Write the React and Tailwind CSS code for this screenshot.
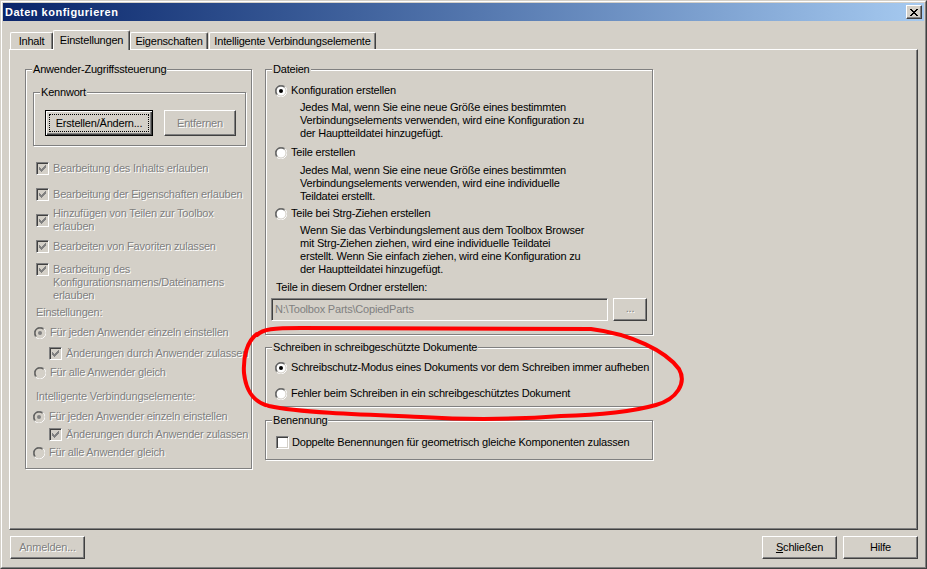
import React from "react"

const dis = "text-[#808080] [text-shadow:1px_1px_0_#fff]"

// classic 3D raised button
const Btn = ({ children, className = "", disabled, isDefault }) => (
  <div
    className={`flex items-center justify-center bg-[#d4d0c8] ${
      isDefault
        ? "border border-black shadow-[inset_1px_1px_0_#fff,inset_-1px_-1px_0_#404040,inset_-2px_-2px_0_#808080]"
        : "border border-t-white border-l-white border-r-[#404040] border-b-[#404040] shadow-[inset_-1px_-1px_0_#808080]"
    } ${disabled ? dis : "text-black"} ${className}`}
  >
    {children}
  </div>
)

const Check = ({ checked, disabled }) => (
  <div
    className={`w-[13px] h-[13px] shrink-0 flex items-center justify-center border border-t-[#808080] border-l-[#808080] border-r-white border-b-white shadow-[inset_1px_1px_0_#404040,inset_-1px_-1px_0_#d4d0c8] ${
      disabled ? "bg-[#d4d0c8]" : "bg-white"
    }`}
  >
    {checked && (
      <svg width="7" height="7" viewBox="0 0 7 7" fill={disabled ? "#808080" : "#000"}>
        <path d="M0 2h1v3H0zM1 3h1v3H1zM2 4h1v3H2zM3 3h1v3H3zM4 2h1v3H4zM5 1h1v3H5zM6 0h1v3H6z" />
      </svg>
    )}
  </div>
)

const Radio = ({ checked, disabled }) => (
  <svg width="12" height="12" viewBox="0 0 12 12" className="shrink-0">
    <circle cx="6" cy="6" r="5" fill={disabled ? "#d4d0c8" : "#fff"} />
    <path d="M10.24 1.76A6 6 0 0 0 1.76 10.24" stroke="#808080" fill="none" />
    <path d="M10.24 1.76A6 6 0 0 1 1.76 10.24" stroke="#fff" fill="none" />
    <path d="M9.54 2.46A5 5 0 0 0 2.46 9.54" stroke="#404040" fill="none" />
    <path d="M9.54 2.46A5 5 0 0 1 2.46 9.54" stroke="#d4d0c8" fill="none" />
    {checked && <circle cx="6" cy="6" r="2" fill={disabled ? "#808080" : "#000"} />}
  </svg>
)

const Group = ({ title, className = "", children }) => (
  <fieldset
    className={`min-w-0 border border-[#808080] shadow-[inset_1px_1px_0_#fff,1px_1px_0_#fff] ${className}`}
  >
    <legend className="ml-[6px] px-px bg-[#d4d0c8] leading-[13px] text-black">{title}</legend>
    {children}
  </fieldset>
)

const Tab = ({ label, w, active }) => (
  <div
    className={`${w} flex items-center justify-center border-t border-l border-r border-t-white border-l-white border-r-[#404040] shadow-[inset_-1px_0_0_#808080] rounded-t-[2px] bg-[#d4d0c8] whitespace-nowrap ${
      active ? "h-[20px] -mb-px relative z-10" : "h-[17px]"
    }`}
  >
    {label}
  </div>
)

const Desc = ({ children, className = "" }) => (
  <div className={`ml-[34px] leading-[13px] whitespace-nowrap ${className}`}>{children}</div>
)

const Row = ({ className = "", children }) => (
  <div className={`flex items-center leading-[13px] whitespace-nowrap ${className}`}>{children}</div>
)

export default function App() {
  return (
    <div className="relative w-[927px] h-[569px] bg-[#d4d0c8] border border-t-[#d4d0c8] border-l-[#d4d0c8] border-r-[#404040] border-b-[#404040] font-['Liberation_Sans',Arial,sans-serif] text-[11px] tracking-[-0.2px] text-black overflow-hidden">
      <div className="h-full border border-t-white border-l-white border-r-[#808080] border-b-[#808080] p-px flex flex-col">
        {/* Title bar */}
        <div className="h-[18px] shrink-0 bg-linear-to-r from-[#0a246a] to-[#a6caf0] flex items-center justify-between pl-[2px] pr-[2px]">
          <span className="text-white font-bold text-[11px] tracking-[0.5px]">Daten konfigurieren</span>
          <Btn className="w-[16px] h-[14px]">
            <svg width="8" height="7" viewBox="0 0 8 7" fill="#000">
              <path d="M0 0h2v1H0zM6 0h2v1H6zM1 1h2v1H1zM5 1h2v1H5zM2 2h4v1H2zM3 3h2v1H3zM2 4h4v1H2zM1 5h2v1H1zM5 5h2v1H5zM0 6h2v1H0zM6 6h2v1H6z" />
            </svg>
          </Btn>
        </div>

        <div className="px-[6px] flex flex-col">
          {/* Tabs */}
          <div className="flex items-end h-[19px] mt-[9px] pl-px">
            <Tab label="Inhalt" w="w-[43px]" />
            <Tab label="Einstellungen" w="w-[77px]" active />
            <Tab label="Eigenschaften" w="w-[78px]" />
            <div className="ml-px">
              <Tab label="Intelligente Verbindungselemente" w="w-[167px]" />
            </div>
          </div>

          {/* Tab panel */}
          <div className="h-[481px] border border-t-white border-l-white border-r-[#404040] border-b-[#404040] shadow-[inset_-1px_-1px_0_#808080] pt-[13px] pl-[15px] flex items-start">
            {/* Left group */}
            <Group title="Anwender-Zugriffssteuerung" className="w-[227px] shrink-0 pb-[9px]">
              <Group title="Kennwort" className="ml-[7px] mt-[10px] w-[213px] pb-[9px]">
                <div className="flex mt-[11px] ml-[11px]">
                  <Btn isDefault className="w-[108px] h-[26px]">
                    <span className="w-[100px] h-[18px] flex items-center justify-center border border-dotted border-black">Erstellen/Ändern...</span>
                  </Btn>
                  <Btn disabled className="w-[72px] h-[26px] ml-[11px]">Entfernen</Btn>
                </div>
              </Group>

              <Row className={`ml-[10px] mt-[16px] gap-[4px] ${dis}`}>
                <Check checked disabled />
                <span>Bearbeitung des Inhalts erlauben</span>
              </Row>
              <Row className={`ml-[10px] mt-[13px] gap-[4px] ${dis}`}>
                <Check checked disabled />
                <span>Bearbeitung der Eigenschaften erlauben</span>
              </Row>
              <Row className={`ml-[10px] mt-[6px] gap-[4px] ${dis}`}>
                <Check checked disabled />
                <span>
                  Hinzufügen von Teilen zur Toolbox
                  <br />
                  erlauben
                </span>
              </Row>
              <Row className={`ml-[10px] mt-[7px] gap-[4px] ${dis}`}>
                <Check checked disabled />
                <span>Bearbeiten von Favoriten zulassen</span>
              </Row>
              <Row className={`ml-[10px] mt-[10px] !items-start gap-[4px] ${dis}`}>
                <Check checked disabled />
                <span>
                  Bearbeitung des
                  <br />
                  Konfigurationsnamens/Dateinamens
                  <br />
                  erlauben
                </span>
              </Row>

              <div className={`ml-[10px] mt-[4px] leading-[13px] ${dis}`}>Einstellungen:</div>
              <Row className={`ml-[8px] mt-[7px] gap-[4px] ${dis}`}>
                <Radio checked disabled />
                <span>Für jeden Anwender einzeln einstellen</span>
              </Row>
              <Row className={`ml-[23px] mt-[8px] gap-[4px] ${dis}`}>
                <Check checked disabled />
                <span>Änderungen durch Anwender zulassen</span>
              </Row>
              <Row className={`ml-[8px] mt-[6px] gap-[4px] ${dis}`}>
                <Radio disabled />
                <span>Für alle Anwender gleich</span>
              </Row>

              <div className={`ml-[10px] mt-[11px] leading-[13px] ${dis}`}>Intelligente Verbindungselemente:</div>
              <Row className={`ml-[7px] mt-[7px] gap-[4px] ${dis}`}>
                <Radio checked disabled />
                <span>Für jeden Anwender einzeln einstellen</span>
              </Row>
              <Row className={`ml-[23px] mt-[5px] gap-[4px] ${dis}`}>
                <Check checked disabled />
                <span>Änderungen durch Anwender zulassen</span>
              </Row>
              <Row className={`ml-[7px] mt-[5px] gap-[4px] ${dis}`}>
                <Radio disabled />
                <span>Für alle Anwender gleich</span>
              </Row>
            </Group>

            {/* Right column */}
            <div className="ml-[13px] flex flex-col w-[388px] shrink-0">
              <Group title="Dateien" className="pb-[13px]">
                <Row className="ml-[9px] mt-[8px] gap-[4px]">
                  <Radio checked />
                  <span>Konfiguration erstellen</span>
                </Row>
                <Desc className="mt-[4px]">
                  Jedes Mal, wenn Sie eine neue Größe eines bestimmten
                  <br />
                  Verbindungselements verwenden, wird eine Konfiguration zu
                  <br />
                  der Hauptteildatei hinzugefügt.
                </Desc>
                <Row className="ml-[9px] mt-[6px] gap-[4px]">
                  <Radio />
                  <span>Teile erstellen</span>
                </Row>
                <Desc className="mt-[5px]">
                  Jedes Mal, wenn Sie eine neue Größe eines bestimmten
                  <br />
                  Verbindungselements verwenden, wird eine individuelle
                  <br />
                  Teildatei erstellt.
                </Desc>
                <Row className="ml-[9px] mt-[4px] gap-[4px]">
                  <Radio />
                  <span>Teile bei Strg-Ziehen erstellen</span>
                </Row>
                <Desc className="mt-[4px]">
                  Wenn Sie das Verbindungslement aus dem Toolbox Browser
                  <br />
                  mit Strg-Ziehen ziehen, wird eine individuelle Teildatei
                  <br />
                  erstellt. Wenn Sie einfach ziehen, wird eine Konfiguration zu
                  <br />
                  der Hauptteildatei hinzugefügt.
                </Desc>
                <div className="ml-[10px] mt-[5px] leading-[13px]">Teile in diesem Ordner erstellen:</div>
                <div className="ml-[5px] mt-[4px] flex items-center">
                  <div className="w-[337px] h-[23px] border border-t-[#808080] border-l-[#808080] border-r-white border-b-white shadow-[inset_1px_1px_0_#404040,inset_-1px_-1px_0_#d4d0c8] flex items-center pl-[3px] text-[#808080]">
                    N:\Toolbox Parts\CopiedParts
                  </div>
                  <Btn disabled className="w-[34px] h-[23px] ml-[5px] pb-[3px]">...</Btn>
                </div>
              </Group>

              <Group title="Schreiben in schreibgeschützte Dokumente" className="mt-[6px] pb-[6px]">
                <Row className="ml-[9px] mt-[7px] gap-[4px]">
                  <Radio checked />
                  <span>Schreibschutz-Modus eines Dokuments vor dem Schreiben immer aufheben</span>
                </Row>
                <Row className="ml-[9px] mt-[13px] gap-[4px]">
                  <Radio />
                  <span>Fehler beim Schreiben in ein schreibgeschütztes Dokument</span>
                </Row>
              </Group>

              <Group title="Benennung" className="mt-[7px] pb-[10px]">
                <Row className="ml-[10px] mt-[9px] gap-[3px]">
                  <Check />
                  <span>Doppelte Benennungen für geometrisch gleiche Komponenten zulassen</span>
                </Row>
              </Group>
            </div>
          </div>

          {/* Bottom buttons */}
          <div className="flex mt-[6px] h-[23px]">
            <Btn disabled className="w-[75px] h-[23px] ml-px">Anmelden...</Btn>
            <Btn className="w-[75px] h-[23px] ml-auto">
              <span>
                <span className="underline">S</span>chließen
              </span>
            </Btn>
            <Btn className="w-[75px] h-[23px] ml-[6px]">Hilfe</Btn>
          </div>
        </div>
      </div>

      {/* red hand-drawn annotation */}
      <svg className="absolute left-0 top-0 pointer-events-none" width="927" height="569">
        <path
          d="M256 334 C262 328 272 327 300 327 L590 328 C630 333 665 350 678 368 C686 382 676 398 655 404 C630 411 600 414 560 415 C520 418 470 419 420 416 C370 414 300 412 268 405 C252 401 245 390 243 372 C242 356 246 340 256 333"
          stroke="#f00"
          strokeWidth="4"
          fill="none"
          strokeLinecap="round"
          strokeLinejoin="round"
        />
      </svg>
    </div>
  )
}
